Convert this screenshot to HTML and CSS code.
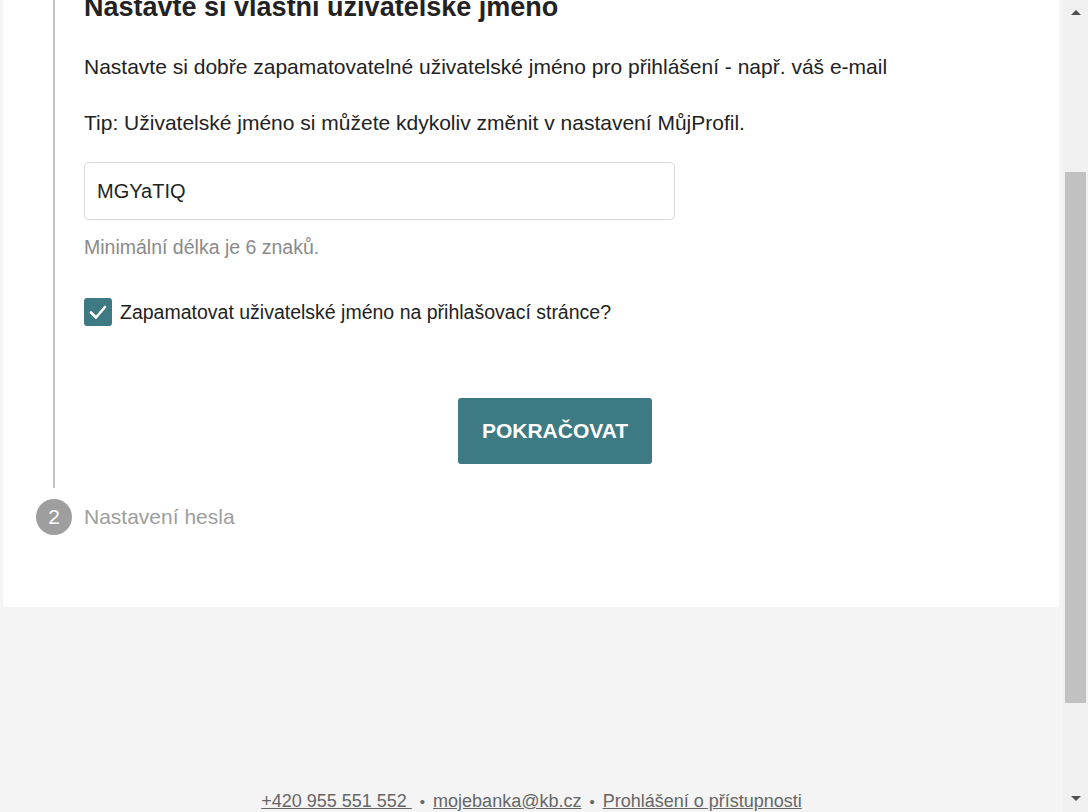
FILE: index.html
```html
<!DOCTYPE html>
<html lang="cs">
<head>
<meta charset="utf-8">
<title>Nastavení uživatelského jména</title>
<link rel="stylesheet" href="styles.css">
</head>
<body>
<div class="viewport">
  <main class="card">
    <section class="step step-active">
      <div class="step-rail"><span class="rail-line"></span></div>
      <div class="step-body">
        <h1 class="step-title">Nastavte si vlastní uživatelské jméno</h1>
        <p class="text first">Nastavte si dobře zapamatovatelné uživatelské jméno pro přihlášení - např. váš e-mail</p>
        <p class="text">Tip: Uživatelské jméno si můžete kdykoliv změnit v nastavení MůjProfil.</p>
        <input class="field" type="text" value="MGYaTIQ">
        <p class="hint">Minimální délka je 6 znaků.</p>
        <label class="check-row">
          <span class="checkbox">
            <svg viewBox="0 0 28 28" width="28" height="28"><polyline points="7,14.5 12,19.5 21,9" fill="none" stroke="#fff" stroke-width="2.6" stroke-linecap="round" stroke-linejoin="round"/></svg>
          </span>
          <span class="check-label">Zapamatovat uživatelské jméno na přihlašovací stránce?</span>
        </label>
        <div class="actions">
          <button class="btn" type="button">POKRAČOVAT</button>
        </div>
      </div>
    </section>
    <section class="step step-next">
      <span class="step-num">2</span>
      <span class="step-name">Nastavení hesla</span>
    </section>
  </main>
  <footer class="footer">
    <a href="#">+420 955 551 552 </a><span class="dot">•</span><a href="#">mojebanka@kb.cz</a><span class="dot">•</span><a href="#">Prohlášení o přístupnosti</a>
  </footer>
</div>
<div class="scrollbar">
  <span class="arrow arrow-up"></span>
  <div class="track"><span class="thumb"></span></div>
  <span class="arrow arrow-down"></span>
</div>
</body>
</html>
```
FILE: styles.css
```css
html, body {
  margin: 0;
  padding: 0;
  height: 812px;
  overflow: hidden;
}
body {
  display: flex;
  background: #f4f4f4;
  font-family: "Liberation Sans", Arial, sans-serif;
  color: #222;
}
.viewport {
  flex: 1;
  min-width: 0;
  display: flex;
  flex-direction: column;
}
.card {
  background: #fff;
  margin: -9px 4px 0 3px;
  padding: 0 33px 72px 33px;
  border-radius: 0 0 3px 3px;
}
.step-active {
  display: flex;
}
.step-rail {
  width: 36px;
  display: flex;
  justify-content: center;
  flex: none;
}
.rail-line {
  width: 2px;
  background: #c2c2c2;
}
.step-body {
  flex: 1;
  margin-left: 12px;
  padding-bottom: 24px;
}
.step-title {
  margin: 0;
  font-size: 27px;
  line-height: 32px;
  font-weight: bold;
  color: #222;
}
.text {
  margin: 32px 0 0;
  font-size: 21px;
  line-height: 24px;
}
.field {
  display: block;
  box-sizing: border-box;
  margin-top: 27px;
  width: 591px;
  height: 58px;
  padding: 0 12px;
  border: 1px solid #d8d8d8;
  border-radius: 5px;
  font-family: "Liberation Sans", Arial, sans-serif;
  font-size: 20px;
  color: #222;
  outline: none;
}
.hint {
  margin: 15px 0 0;
  font-size: 19.5px;
  line-height: 24px;
  color: #8a8a8a;
}
.check-row {
  display: flex;
  align-items: center;
  gap: 8px;
  margin-top: 39px;
}
.checkbox {
  width: 28px;
  height: 28px;
  border-radius: 3px;
  background: #3e7a83;
  display: flex;
}
.check-label {
  font-size: 19.5px;
  line-height: 24px;
}
.actions {
  display: flex;
  justify-content: center;
  margin-top: 72px;
}
.btn {
  width: 194px;
  height: 66px;
  border: 0;
  border-radius: 3px;
  background: #3e7a83;
  color: #fff;
  font-family: "Liberation Sans", Arial, sans-serif;
  font-weight: bold;
  font-size: 21px;
  letter-spacing: 0;
}
.step-next {
  display: flex;
  align-items: center;
  gap: 12px;
  margin-top: 11px;
}
.step-num {
  width: 36px;
  height: 36px;
  border-radius: 50%;
  background: #9e9e9e;
  color: #fff;
  font-size: 21px;
  display: flex;
  align-items: center;
  justify-content: center;
}
.step-name {
  font-size: 21px;
  color: #9e9e9e;
}
.footer {
  margin-top: 182px;
  text-align: center;
  font-size: 18px;
  line-height: 24px;
  color: #666;
}
.footer a {
  color: #666;
  text-decoration: underline;
}
.dot {
  margin: 0 8px;
  font-size: 15px;
}
.scrollbar {
  width: 25px;
  flex: none;
  background: #f0f0f0;
  display: flex;
  flex-direction: column;
  align-items: center;
}
.arrow {
  width: 0;
  height: 0;
  border-left: 5.5px solid transparent;
  border-right: 5.5px solid transparent;
}
.arrow-up {
  margin-top: 10px;
  border-bottom: 5px solid #505050;
}
.arrow-down {
  margin-bottom: 11px;
  border-top: 5px solid #505050;
}
.track {
  flex: 1;
  width: 100%;
  display: flex;
  flex-direction: column;
}
.thumb {
  margin: 157px 2px 0;
  height: 531px;
  background: #c1c1c1;
}
```
